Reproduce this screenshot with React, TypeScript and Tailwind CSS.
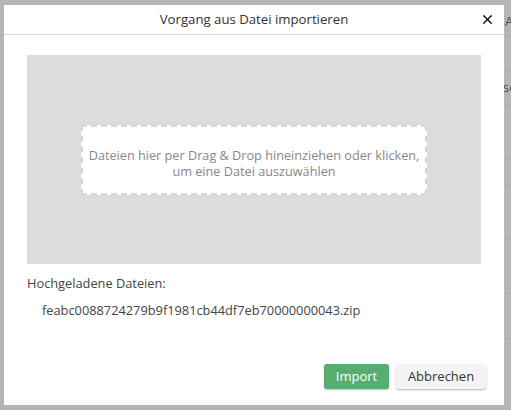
import { X } from 'lucide-react';

const rows = [35, 70, 105, 158, 185, 238, 293, 338];

export default function App() {
  return (
    <div className="relative h-[410px] w-[511px] overflow-hidden bg-white font-['Open_Sans',sans-serif]">
      {/* page behind the dialog */}
      <div className="absolute inset-0">
        <div className="absolute left-[505px] top-[12px] text-[13px] text-gray-500">Al</div>
        <div className="absolute left-[503px] top-[78px] text-[13px] text-gray-500">se</div>
        {rows.map((y) => (
          <div key={y} className="absolute left-0 right-0 h-px bg-gray-100" style={{ top: y }} />
        ))}
      </div>
      <div className="absolute inset-0 bg-black/[0.29]" />

      <div className="absolute left-[4px] top-[5px] flex h-[400px] w-[500px] flex-col bg-white">
        <div className="relative flex h-[30px] shrink-0 items-center justify-center border-b border-[#dcdcdc]">
          <h1 className="text-[13.2px] text-[#333]">Vorgang aus Datei importieren</h1>
          <button className="absolute right-[9px] top-[7px] text-black">
            <X size={15} strokeWidth={2} />
          </button>
        </div>

        <div className="flex flex-1 flex-col px-[23px] pt-[20px]">
          <div className="flex h-[209px] items-center justify-center bg-[#dcdcdc]">
            <div className="flex h-[70px] w-[346px] flex-col items-center justify-center border-2 border-dashed border-[#d6d6d6] bg-white pt-[7px] text-center text-[12.7px] leading-[16px] text-[#888]">
              <span>Dateien hier per Drag &amp; Drop hineinziehen oder klicken,</span>
              <span>um eine Datei auszuwählen</span>
            </div>
          </div>

          <p className="mt-[10px] text-[12.8px] text-[#444]">Hochgeladene Dateien:</p>
          <p className="mt-[8px] pl-[15px] text-[12.8px] text-[#444]">feabc0088724279b9f1981cb44df7eb70000000043.zip</p>

          <div className="mt-auto mb-[16px] flex justify-end gap-[7px]">
            <button className="h-[25px] w-[65px] rounded-[3px] bg-[#57ad70] text-[13px] text-white shadow-[0_1px_2px_rgba(0,0,0,0.25)]">
              Import
            </button>
            <button className="-mr-[5px] h-[25px] w-[90px] rounded-[3px] bg-[#f4f4f4] text-[13px] text-[#333] shadow-[0_1px_2px_rgba(0,0,0,0.3)]">
              Abbrechen
            </button>
          </div>
        </div>
      </div>
    </div>
  );
}
